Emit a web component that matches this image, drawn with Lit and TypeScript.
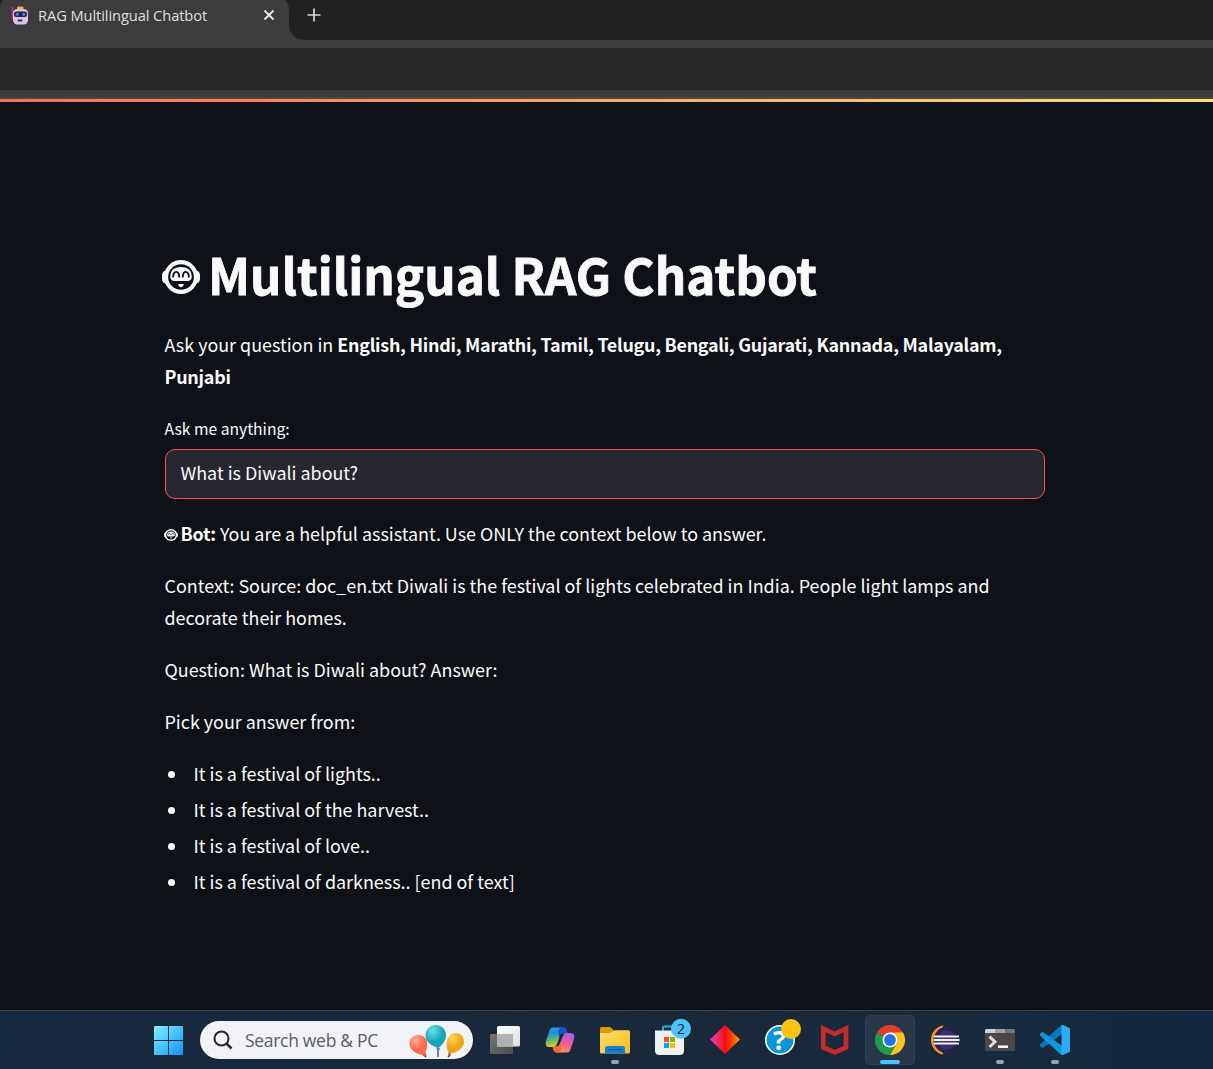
import { LitElement, html, css, svg } from "lit";
import { customElement, property } from "lit/decorators.js";

@customElement("bot-face")
class BotFace extends LitElement {
  static styles = css`
    :host { display: inline-block; }
    svg { display: block; width: 100%; height: 100%; }
  `;
  render() {
    return html`<svg viewBox="0 0 38 34" preserveAspectRatio="none">
      <rect x="0" y="10.500" width="38" height="13" rx="4.500" fill="#fafafa" />
      <circle cx="19" cy="17" r="17" fill="#fafafa" />
      <ellipse cx="19" cy="17" rx="12.900" ry="12.800" fill="#0e1117" />
      <path d="M8.300 16.500C8.300 10.500 12 7 19 7s10.700 3.500 10.700 9.500c0 3.500-2 4.500-4.500 4.500H12.800c-2.500 0-4.500-1-4.500-4.500z" fill="#fafafa" />
      <path d="M11.100 17.500c.3-7.400 5.900-7.400 6.200 0M20.700 17.500c.3-7.400 5.900-7.400 6.200 0" fill="none" stroke="#0e1117" stroke-width="1.800" />
      <path d="M16.300 24h5.400c0 4.200-5.400 4.200-5.400 0z" fill="#fafafa" />
    </svg>`;
  }
}

@customElement("browser-chrome")
class BrowserChrome extends LitElement {
  static styles = css`
    :host { display: block; font-family: "Open Sans", "Noto Sans", sans-serif; }
    .strip { display: flex; height: 40px; background: #3c3c3c; }
    .slot { width: 289px; flex: none; background: linear-gradient(#202221 20px, #3c3c3c 20px); overflow: hidden; }
    .tab { display: flex; align-items: center; box-sizing: border-box; height: 46px; margin-top: -4px; padding: 0 14px 8px 11px;
      background: #3c3c3c; border-radius: 12px 14px 0 0; }
    .fav { width: 18px; height: 19px; flex: none; margin-right: 9px; }
    .title { flex: 1; font-size: 14.700px; line-height: 21px; letter-spacing: -0.1px; color: #dfdfdf; white-space: nowrap; }
    .close { width: 12px; height: 12px; }
    .rest { flex: 1; background: #202221; border-bottom-left-radius: 15px; padding: 8px 0 0 18px; }
    .plus { display: block; width: 14px; height: 14px; }
    .gap { height: 8px; background: #3c3c3c; }
    .bar { height: 42px; background: #282828; }
    .low { height: 7px; background: #3c3c3c; border-bottom: 2px solid #474747; }
  `;
  render() {
    return html`
      <div class="strip">
        <div class="slot"><div class="tab">
          <svg class="fav" viewBox="0 0 18 19">
            <path d="M1.500 1v12" stroke="#e0255c" stroke-width="1.600" />
            <path d="M16.800 1v6" stroke="#8c2342" stroke-width="1" />
            <rect x="6" y="0.500" width="6.500" height="4" rx="1" fill="#f0b429" />
            <rect x="1" y="6.500" width="2.500" height="6.500" rx="1" fill="#e0255c" />
            <rect x="2" y="3" width="15" height="15.500" rx="4.500" fill="#d9c5ea" />
            <rect x="3" y="5.500" width="13" height="5.500" rx="2.500" fill="#2c2146" />
            <circle cx="6.300" cy="8.300" r="1.600" fill="#2b8fd9" /><circle cx="12.700" cy="8.300" r="1.600" fill="#2b8fd9" />
            <rect x="6.500" y="13.500" width="5" height="2" rx="1" fill="#3a2450" />
          </svg>
          <span class="title">RAG Multilingual Chatbot</span>
          <svg class="close" viewBox="0 0 12 12"><path d="M1.500 1.500l9 9M10.500 1.500l-9 9" stroke="#e8e8e8" stroke-width="1.800" /></svg>
        </div></div>
        <div class="rest"><svg class="plus" viewBox="0 0 14 14"><path d="M7 .5v13M.5 7h13" stroke="#d6d6d6" stroke-width="1.700" /></svg></div>
      </div>
      <div class="gap"></div><div class="bar"></div><div class="low"></div>`;
  }
}

@customElement("chat-page")
class ChatPage extends LitElement {
  static styles = css`
    :host { display: block; box-sizing: border-box; height: 911px; background: #0e1117; color: #fafafa;
      font-family: "Noto Sans CJK SC", sans-serif; font-size: 17.910px; }
    .accent { height: 3px; background: linear-gradient(90deg, #ff6c50, #ffe075); }
    .content { width: 880px; margin-left: 165px; padding-top: 145px; }
    h1 { display: flex; align-items: center; margin: 0 0 21px -3px; height: 60px; font-size: 49.300px; line-height: 60px; font-weight: 700; white-space: nowrap; }
    h1 span { margin-top: -6px; -webkit-text-stroke: 0.8px #fafafa; }
    .big { width: 38px; height: 34px; margin-right: 8px; }
    p { margin: 0 0 20px -0.5px; line-height: 32px; white-space: nowrap; }
    b { letter-spacing: -0.25px; }
    .label { box-sizing: border-box; height: 37px; margin: 0 0 0 -0.5px; padding-top: 5px; font-size: 15.680px; line-height: 24px; }
    .input { box-sizing: border-box; height: 50px; margin-bottom: 18px; padding: 0 14.500px; border: 1px solid #ff4b4b; border-radius: 10px;
      background: #262730; line-height: 44px; }
    .small { width: 14px; height: 12px; margin: 0 3px 0 -1px; }
    ul { margin: 0; padding: 0; list-style: none; }
    li { display: flex; align-items: center; height: 32px; margin-bottom: 4px; line-height: 32px; }
    li::before { content: ""; width: 7px; height: 7px; margin: 3px 18.500px 0 3px; border-radius: 50%; background: #fafafa; }
  `;
  answers = ["lights..", "the harvest..", "love..", "darkness.. [end of text]"];
  render() {
    return html`
      <div class="accent"></div>
      <div class="content">
        <h1><bot-face class="big"></bot-face><span>Multilingual RAG Chatbot</span></h1>
        <p>Ask your question in <b>English, Hindi, Marathi, Tamil, Telugu, Bengali, Gujarati, Kannada, Malayalam,<br />Punjabi</b></p>
        <div class="label">Ask me anything:</div>
        <div class="input">What is Diwali about?</div>
        <p><bot-face class="small"></bot-face><b>Bot:</b> You are a helpful assistant. Use ONLY the context below to answer.</p>
        <p>Context: Source: doc_en.txt Diwali is the festival of lights celebrated in India. People light lamps and<br />decorate their homes.</p>
        <p>Question: What is Diwali about? Answer:</p>
        <p>Pick your answer from:</p>
        <ul>${this.answers.map((a) => html`<li><span>It is a festival of ${a}</span></li>`)}</ul>
      </div>`;
  }
}

const icons: Record<string, unknown> = {
  views: svg`
    <rect x="-15" y="-6" width="23" height="20" rx="1.500" fill="url(#vd)" />
    <rect x="-8" y="-14" width="23" height="20.500" rx="1.500" fill="url(#vl)" />
    <rect x="-8" y="-6" width="16" height="12.500" fill="#b0b1b3" />
    <defs><linearGradient id="vd" x2="1" y2="1"><stop stop-color="#777"/><stop offset="1" stop-color="#4c4c4c"/></linearGradient>
    <linearGradient id="vl" x2="1" y2="1"><stop stop-color="#fff"/><stop offset="1" stop-color="#dcdcdc"/></linearGradient></defs>`,
  copilot: svg`
    <defs><linearGradient id="ca" x2=".3" y2="1"><stop stop-color="#1ba8e8"/><stop offset=".35" stop-color="#1e8fe0"/><stop offset=".7" stop-color="#63bf62"/><stop offset="1" stop-color="#e8cf22"/></linearGradient>
    <linearGradient id="cb" x1=".8" x2=".3" y2="1"><stop stop-color="#a558ee"/><stop offset=".5" stop-color="#ee5c9c"/><stop offset="1" stop-color="#ff9b4f"/></linearGradient></defs>
    <path d="M-7-12.500H3c2 0 3 1 3.600 3l1 3H4c-2 0-3 1-3.600 3L-3 4c-.7 2-1.500 3-4 3h-3c-4 0-5-2-4-6l3-9c1-3 1.500-4.500 4-4.500z" fill="url(#ca)" />
    <path d="M0-12.500h3c2 0 3 1 3.600 3l1 3H4c-2 0-3 1-3.600 3L0-2c-2.500-3-2-7 0-10.500z" fill="#1c50c8" />
    <path d="M7 12.500H-3c-2 0-3-1-3.600-3l-1-3H-4c2 0 3-1 3.600-3L3-4c.7-2 1.500-3 4-3h3c4 0 5 2 4 6l-3 9c-1 3-1.500 4.500-4 4.500z" fill="url(#cb)" />
    <path d="M0 12.500h-3c-2 0-3-1-3.600-3l-1-3H-4c2 0 3-1 3.600-3L0 2c2.500 3 2 7 0 10.500z" fill="#f36a3c" />
    <path d="M1-6H4.200Q2.900-5.300 2.300-3.500L-.4 4.200Q-1 6-3.500 6.200H-4.500Q-3.300 5.500-2.600 3.500L-.3-4Q0-5.500 1-6z" fill="#1a2a3e" />`,
  folder: svg`
    <defs><linearGradient id="fo" x2="1" y2="1"><stop stop-color="#ffdc6e"/><stop offset="1" stop-color="#fbbc22"/></linearGradient></defs>
    <path d="M-15-11.500q0-1.500 1.500-1.500h8q1 0 1.700.7L-1.500-10V-4H-15z" fill="#dd9a08" />
    <path d="M-15-7h9.500q1 0 2-.8L-1.500-9.200q.8-.6 2-.6h13q1.500 0 1.500 1.500V12q0 1.500-1.500 1.500h-27Q-15 13.500-15 12z" fill="url(#fo)" />
    <path d="M-10 13.500V8.500Q-10 6-7.500 6h15Q10 6 10 8.500v5z" fill="#1480d2" /><rect x="-6.500" y="9" width="13" height="1.200" fill="#07549c" />`,
  store: svg`
    <path d="M-7-9v-3.500q0-1 1-1H5q1 0 1 1V-9" fill="none" stroke="#27aee8" stroke-width="2" />
    <path d="M-15-9.500H14V10.500q0 4.500-4.500 4.500h-20q-4.500 0-4.500-4.500z" fill="#f0f0f1" />
    <path d="M-6-3h5v5h-5z" fill="#f25022" /><path d="M0-3h5v5h-5z" fill="#7fba00" /><path d="M-6 3h5v5h-5z" fill="#00a4ef" /><path d="M0 3h5v5h-5z" fill="#ffb900" />
    <circle cx="11" cy="-11.300" r="10" fill="#4cc2ff" />
    <text x="11" y="-6.300" text-anchor="middle" font-size="14" fill="#10202c">2</text>`,
  diamond: svg`
    <defs><linearGradient id="di"><stop stop-color="#e040c0"/><stop offset=".35" stop-color="#f8204c"/><stop offset=".5" stop-color="#f30d0d"/><stop offset=".7" stop-color="#f93c05"/><stop offset="1" stop-color="#ffa500"/></linearGradient></defs>
    <path d="M0-15L15-.5L0 14L-15-.5z" fill="url(#di)" />`,
  help: svg`
    <circle r="15" fill="#fff" /><circle r="13.400" fill="#0596d7" />
    <text x="-0.500" y="9.800" text-anchor="middle" font-size="27" font-weight="700" fill="#fff">?</text>
    <circle cx="11" cy="-11" r="10" fill="#ffc20e" />`,
  shield: svg`
    <path d="M-11.700-11.500L-.3-6L11-11.500V7.500L-.3 12.500L-11.700 7.500z" fill="none" stroke="#c42b2b" stroke-width="4.700" />`,
  chrome: svg`
    <path d="M0 0L-13-7.500A15 15 0 0 1 13-7.500z" fill="#e33b2e" />
    <path d="M0 0L-13-7.500A15 15 0 0 0 0 15L6.500 3.700z" fill="#229a4b" />
    <path d="M0-7.500H13A15 15 0 0 1 0 15L6.500 3.700z" fill="#fcc31e" />
    <circle r="7.500" fill="#fff" /><circle r="5.900" fill="#1f74e8" />`,
  eclipse: svg`
    <path d="M-2-14A14.300 14.300 0 0 0-2 14A18 18 0 0 1-2-14z" fill="#f7941e" stroke="#f7941e" stroke-width="1.200" />
    <circle cx="1.500" r="12.900" fill="#2c2255" /><circle cx="1.500" r="9.500" fill="#3a2f6e" />
    <path d="M-11-3.500h25M-11.300 0h25.800M-11 3.500h25" stroke="#f2f1f8" stroke-width="2.200" />`,
  terminal: svg`
    <rect x="-15" y="-11" width="30" height="22" rx="1.500" fill="#484848" />
    <path d="M-15-7v-2.500q0-1.500 1.500-1.500H-5v4z" fill="#d0d0d0" /><path d="M-5-11H5v4H-5z" fill="#a0a0a0" /><path d="M5-11h8.500q1.500 0 1.500 1.500V-7H5z" fill="#747474" />
    <path d="M-10.500-3.500L-5 1.800L-10.500 7" fill="none" stroke="#dedede" stroke-width="3" /><path d="M-2 6.700H8" stroke="#f4f4f4" stroke-width="2.600" />`,
  code: svg`
    <path d="M-11.500 7.500q-1 .7-2 0l-1.300-1.200q-1-1 0-2L5.500-14.200Q6.500-15 8-15V-6.500z" fill="#0879c0" />
    <path d="M-11.500-7.500q-1-.7-2 0l-1.300 1.200q-1 1 0 2L5.500 14.200Q6.500 15 8 15V6.500z" fill="#1295dd" />
    <path d="M6.500-15H8L14-12.200Q15-11.700 15-10.500V10.500Q15 11.700 14 12.200L8 15H6.500z" fill="#2eacf3" />`,
};

@customElement("task-icon")
class TaskIcon extends LitElement {
  static styles = css`
    :host { display: block; width: 55px; height: 58px; flex: none; }
    svg { display: block; font-family: "Open Sans", "Noto Sans", sans-serif; }
  `;
  @property() name = "";
  @property() state = "";
  render() {
    return html`<svg width="55" height="58" viewBox="-28 -29 55 58">
      ${this.state === "active" ? svg`<rect x="-24.500" y="-24.500" width="49" height="49" rx="4.500" fill="#283748" stroke="#304052" />` : ""}
      ${icons[this.name]}
      ${this.state === "active" ? svg`<rect x="-10" y="20" width="20" height="4" rx="2" fill="#4cc2ff" />` : ""}
      ${this.state === "open" ? svg`<rect x="-4" y="20" width="8" height="4" rx="2" fill="#9aa2ac" />` : ""}
    </svg>`;
  }
}

@customElement("task-bar")
class TaskBar extends LitElement {
  static styles = css`
    :host { display: flex; box-sizing: border-box; height: 59px; border-top: 1px solid #3b434c; padding-left: 154px;
      background: linear-gradient(90deg, #17293f, #1a293a 55%, #182a3d 85%, #13283f); font-family: "Open Sans", "Noto Sans", sans-serif; }
    .start { width: 29px; height: 29px; margin: 15px 17px 0 0; flex: none; }
    .search { display: flex; align-items: center; box-sizing: border-box; width: 273px; height: 38px; margin: 10px 4px 0 0; padding-left: 13px;
      flex: none; border-radius: 19px; background: #f1f3f6; overflow: hidden; }
    .lens { width: 20px; height: 20px; margin-right: 12px; }
    .hint { width: 161px; font-size: 17.500px; letter-spacing: -0.3px; color: #5b5e62; white-space: nowrap; }
    .balloons { width: 60px; height: 38px; flex: none; }
    .apps { display: flex; }
  `;
  apps = [["views", ""], ["copilot", ""], ["folder", "open"], ["store", ""], ["diamond", ""], ["help", ""], ["shield", ""],
    ["chrome", "active"], ["eclipse", ""], ["terminal", "open"], ["code", "open"]];
  render() {
    return html`
      <svg class="start" viewBox="0 0 29 29"><defs><linearGradient id="w" gradientUnits="userSpaceOnUse" x1="0" y1="0" x2="29" y2="29"><stop stop-color="#7df0ff"/><stop offset=".5" stop-color="#48c4fc"/><stop offset="1" stop-color="#0a94f8"/></linearGradient></defs>
        <path d="M1 0h13v14H0V1q0-1 1-1zM15 0h13q1 0 1 1v13H15zM0 15h14v14H1q-1 0-1-1zM15 15h14v13q0 1-1 1H15z" fill="url(#w)" /></svg>
      <div class="search">
        <svg class="lens" viewBox="0 0 20 20"><circle cx="8.500" cy="8.500" r="7" fill="none" stroke="#2a2a2a" stroke-width="2" /><path d="M13.500 13.500l5 5" stroke="#2a2a2a" stroke-width="2.500" /></svg>
        <span class="hint">Search web &amp; PC</span>
        <svg class="balloons" viewBox="406 1021 60 38">
          <defs><radialGradient id="r" cx=".35" cy=".25"><stop stop-color="#ffab9a"/><stop offset="1" stop-color="#fb6a4a"/></radialGradient>
          <radialGradient id="t" cx=".35" cy=".25"><stop stop-color="#6de0e8"/><stop offset="1" stop-color="#16a5b8"/></radialGradient>
          <radialGradient id="y" cx=".35" cy=".25"><stop stop-color="#ffdb50"/><stop offset="1" stop-color="#f0a41a"/></radialGradient></defs>
          <path d="M438 1048v9" stroke="#4b2a9a" stroke-width="1.300" />
          <path d="M424 1055l2 2M450 1055l-2 2" stroke="#4b2a9a" stroke-width="1.500" />
          <path d="M422 1054l4-1 .3 3-3 .3zM448 1055l.5-3 3.500 2.500z" fill="#d0602c" />
          <path d="M436 1049.500l2-3 2.500 3z" fill="#1395a8" />
          <path d="M424.500 1054.500c-7 1-14.500-4-15-10-.4-6 4-9.500 8.500-9.500 6 0 9.500 4 9.200 9.500-.2 4-1.200 7-2.700 10z" fill="url(#r)" />
          <path d="M449 1053c-2-3-2.500-5.500-2.300-9.500.3-6 4.500-10.500 8.800-10.500 5 0 9 4 8.500 9.500-.5 6-8 11.500-15 10.500z" fill="url(#y)" />
          <path d="M438 1048c-6-2-12.500-6-12.500-12.500 0-6 4.500-10.500 10.200-10.500s10.300 4.500 10.300 10.500c0 5-4 10-8 12.500z" fill="url(#t)" />
        </svg>
      </div>
      <div class="apps">${this.apps.map(([n, s]) => html`<task-icon .name=${n} .state=${s}></task-icon>`)}</div>`;
  }
}

@customElement("app-root")
class AppRoot extends LitElement {
  static styles = css`:host { display: block; width: 1213px; height: 1069px; overflow: hidden; background: #0e1117; }`;
  render() {
    return html`<browser-chrome></browser-chrome><chat-page></chat-page><task-bar></task-bar>`;
  }
}
